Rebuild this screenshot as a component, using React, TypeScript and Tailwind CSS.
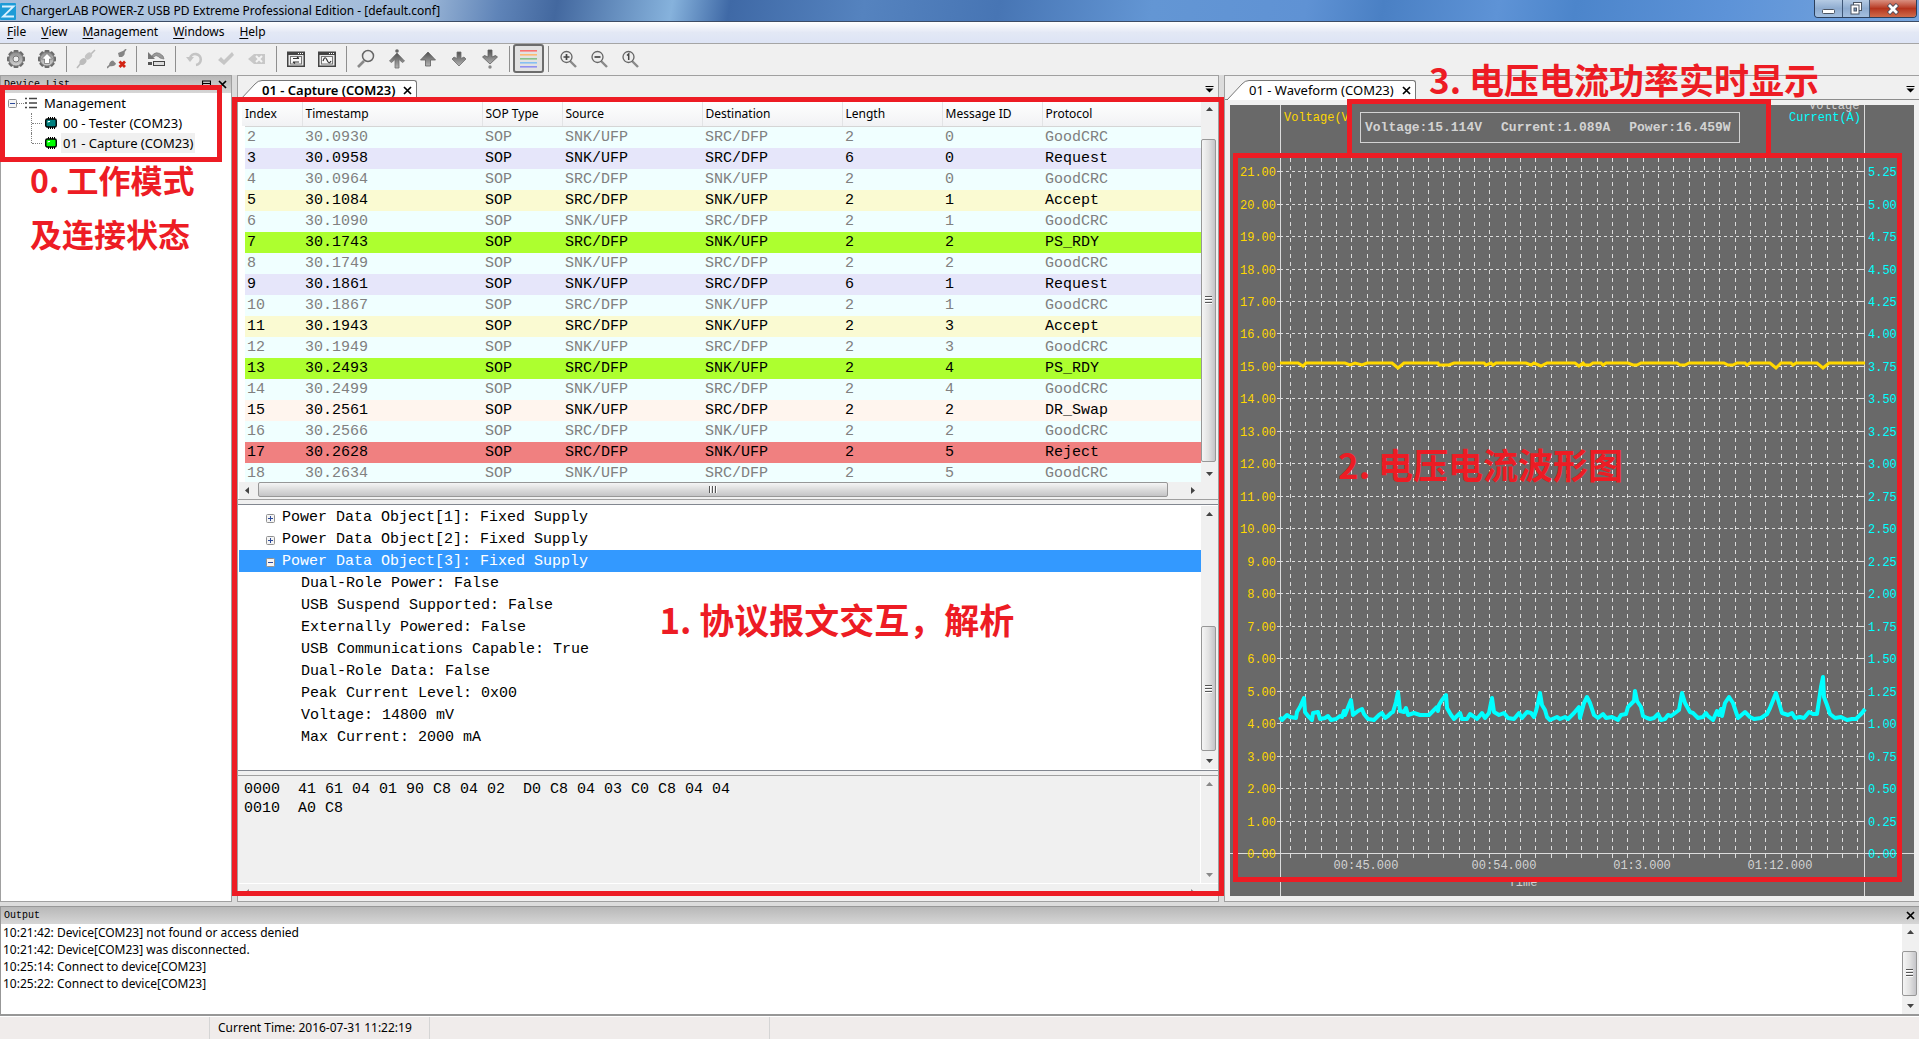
import { useState } from 'react';
import type { ReactNode } from 'react';
import clsx from 'clsx';

interface Packet {
    index: number;
    time: string;
    source: string;
    destination: string;
    length: number;
    messageId: number;
    protocol: string;
}

const SRC = 'SRC/DFP';
const SNK = 'SNK/UFP';

const packets: Packet[] = [
    { index: 2, time: '30.0930', source: SNK, destination: SRC, length: 2, messageId: 0, protocol: 'GoodCRC' },
    { index: 3, time: '30.0958', source: SNK, destination: SRC, length: 6, messageId: 0, protocol: 'Request' },
    { index: 4, time: '30.0964', source: SRC, destination: SNK, length: 2, messageId: 0, protocol: 'GoodCRC' },
    { index: 5, time: '30.1084', source: SRC, destination: SNK, length: 2, messageId: 1, protocol: 'Accept' },
    { index: 6, time: '30.1090', source: SNK, destination: SRC, length: 2, messageId: 1, protocol: 'GoodCRC' },
    { index: 7, time: '30.1743', source: SRC, destination: SNK, length: 2, messageId: 2, protocol: 'PS_RDY' },
    { index: 8, time: '30.1749', source: SNK, destination: SRC, length: 2, messageId: 2, protocol: 'GoodCRC' },
    { index: 9, time: '30.1861', source: SNK, destination: SRC, length: 6, messageId: 1, protocol: 'Request' },
    { index: 10, time: '30.1867', source: SRC, destination: SNK, length: 2, messageId: 1, protocol: 'GoodCRC' },
    { index: 11, time: '30.1943', source: SRC, destination: SNK, length: 2, messageId: 3, protocol: 'Accept' },
    { index: 12, time: '30.1949', source: SNK, destination: SRC, length: 2, messageId: 3, protocol: 'GoodCRC' },
    { index: 13, time: '30.2493', source: SRC, destination: SNK, length: 2, messageId: 4, protocol: 'PS_RDY' },
    { index: 14, time: '30.2499', source: SNK, destination: SRC, length: 2, messageId: 4, protocol: 'GoodCRC' },
    { index: 15, time: '30.2561', source: SNK, destination: SRC, length: 2, messageId: 2, protocol: 'DR_Swap' },
    { index: 16, time: '30.2566', source: SRC, destination: SNK, length: 2, messageId: 2, protocol: 'GoodCRC' },
    { index: 17, time: '30.2628', source: SRC, destination: SNK, length: 2, messageId: 5, protocol: 'Reject' },
    { index: 18, time: '30.2634', source: SNK, destination: SRC, length: 2, messageId: 5, protocol: 'GoodCRC' },
];

const rowColors: Record<string, string> = {
    GoodCRC: 'bg-[#f0ffff] text-[#808080]',
    Request: 'bg-[#e6e6fa] text-black',
    Accept: 'bg-[#fafad2] text-black',
    PS_RDY: 'bg-[#adff2f] text-black',
    DR_Swap: 'bg-[#fff5ee] text-black',
    Reject: 'bg-[#f08080] text-black',
};

const pdoFields = [
    'Dual-Role Power: False',
    'USB Suspend Supported: False',
    'Externally Powered: False',
    'USB Communications Capable: True',
    'Dual-Role Data: False',
    'Peak Current Level: 0x00',
    'Voltage: 14800 mV',
    'Max Current: 2000 mA',
];

const outputLines = [
    '10:21:42: Device[COM23] not found or access denied',
    '10:21:42: Device[COM23] was disconnected.',
    '10:25:14: Connect to device[COM23]',
    '10:25:22: Connect to device[COM23]',
];

const currentTrace =
    '50,612 52,615 57,610 60,612 66,613 67,607 70,602 74,593 75,607 78,611 82,615 83,608 88,607 90,614 95,613 98,611 101,615 106,614 110,611 112,612 114,606 115,610 121,595 123,610 128,606 132,604 134,609 138,614 144,615 149,610 152,608 155,613 158,611 161,608 163,607 166,597 168,587 170,606 174,607 176,603 178,610 184,608 190,610 199,610 204,605 207,602 208,606 209,600 212,595 216,590 217,603 221,610 224,614 230,608 232,614 237,614 240,609 243,611 247,614 252,608 255,613 259,608 262,593 264,607 269,610 274,608 278,613 284,614 289,608 292,613 297,607 301,608 304,612 306,606 308,598 310,588 312,600 315,605 317,612 320,615 327,612 330,614 335,612 338,614 344,608 349,602 350,613 354,598 357,592 360,598 364,610 368,613 373,609 376,613 382,612 388,615 391,610 396,609 398,602 404,596 405,586 407,596 411,602 413,611 417,613 420,614 424,613 428,609 431,615 435,614 438,610 441,611 445,608 449,605 452,588 455,598 460,607 463,608 468,613 473,612 476,608 478,611 483,615 487,606 489,610 491,604 492,611 495,598 499,592 503,598 508,613 515,607 520,612 524,614 531,613 537,609 540,603 546,588 549,598 552,608 558,610 562,608 565,613 570,612 574,613 579,607 583,609 587,609 591,582 593,572 594,592 597,600 600,609 605,613 611,612 617,615 622,614 626,614 632,608 635,604';

const voltageTrace =
    '50,258 68,258 73,261 76,258 115,258 120,260 125,258 132,260 137,258 162,258 168,263 174,258 208,258 209,260 219,260 224,258 254,258 256,260 261,258 263,260 266,258 296,258 301,260 304,258 311,261 317,258 345,258 349,261 353,258 355,260 360,260 363,258 371,258 373,260 376,258 398,258 403,260 407,260 411,258 447,258 450,260 455,260 459,258 494,258 498,260 503,260 507,258 515,258 517,260 520,258 540,258 546,263 551,258 561,258 563,260 566,258 587,258 593,263 599,258 635,258';

const ui = "font-['Noto_Sans','Noto_Sans_CJK_SC',sans-serif]";
const mono = "font-['Liberation_Mono',monospace]";
const noteFont = "font-['Noto_Sans_CJK_SC',sans-serif] font-bold text-[#ed1c24] whitespace-nowrap";

const Caret = ({ dir }: { dir: 'up' | 'down' | 'left' | 'right' }) => {
    const d = { up: 'M1 6L4.5 2L8 6Z', down: 'M1 3L4.5 7L8 3Z', left: 'M6 1L2 4.5L6 8Z', right: 'M3 1L7 4.5L3 8Z' }[dir];
    return <svg width="9" height="9" viewBox="0 0 9 9"><path d={d} fill="#444" /></svg>;
};

interface ScrollBarProps {
    horizontal?: boolean;
    before?: string;
    thumb?: string;
    after?: string;
    faded?: boolean;
}

const ScrollBar = ({ horizontal, before = 'flex-1', thumb, after = 'flex-none', faded }: ScrollBarProps) => (
    <div className={clsx('flex shrink-0 bg-[#f0f0f0]', horizontal ? 'h-[17px] flex-row' : 'w-[17px] flex-col')}>
        <button type="button" aria-label={horizontal ? 'Scroll left' : 'Scroll up'} className={clsx('flex size-[17px] shrink-0 items-center justify-center', faded && 'opacity-60')}>
            <Caret dir={horizontal ? 'left' : 'up'} />
        </button>
        <div className={before} />
        {thumb && (
            <div
                className={clsx(
                    'flex items-center justify-center gap-px rounded-[2px] border border-[#979797]',
                    horizontal ? 'mb-[2px] flex-row bg-linear-to-b from-[#f5f5f5] via-[#dcdcdc] to-[#c4c4c6]' : 'mr-[2px] flex-col bg-linear-to-r from-[#f5f5f5] via-[#e2e2e2] to-[#c4c4c8]',
                    thumb,
                )}
            >
                {[0, 1, 2].map((i) => (
                    <div key={i} className={clsx('border-[#555] bg-white', horizontal ? 'h-[7px] w-[2px] border-l' : 'h-[2px] w-[7px] border-t')} />
                ))}
            </div>
        )}
        <div className={after} />
        <button type="button" aria-label={horizontal ? 'Scroll right' : 'Scroll down'} className={clsx('flex size-[17px] shrink-0 items-center justify-center', faded && 'opacity-60')}>
            <Caret dir={horizontal ? 'right' : 'down'} />
        </button>
    </div>
);

const CloseX = () => (
    <svg width="9" height="9" viewBox="0 0 9 9"><path d="M1 1L8 8M8 1L1 8" stroke="#000" strokeWidth="1.7" /></svg>
);

const Expander = ({ open }: { open?: boolean }) => (
    <svg width="9" height="9" viewBox="0 0 9 9" className="shrink-0">
        <rect x="0.5" y="0.5" width="8" height="8" rx="1" fill="#f4f4f4" stroke="#919191" />
        <path d={open ? 'M2 4.5H7' : 'M2 4.5H7M4.5 2V7'} stroke="#2c4a9a" />
    </svg>
);

const Chip = ({ color }: { color: string }) => (
    <svg width="12" height="12" viewBox="0 0 12 12" className="shrink-0">
        <path d="M3.5 0V12M5.5 0V12M7.5 0V12M9.5 0V12" stroke="#000" />
        <rect x="0.75" y="2" width="10.5" height="8" rx="1.5" fill={color} stroke="#000" strokeWidth="1.4" />
        <path d="M3 5.5V4.5H5" stroke="#fff" fill="none" />
    </svg>
);

const Tab = ({ label, active }: { label: string; active?: boolean }) => (
    <div className="relative flex h-[24px] items-end border-b border-[#8c8c8c] pl-[2px]">
        <svg width="22" height="20" viewBox="0 0 22 20" className="-mb-px shrink-0">
            <path d="M0 20L15 4Q18 0.5 22 0.5V20Z" fill="#fff" />
            <path d="M0 20L15 4Q18 0.5 22 0.5" fill="none" stroke="#777" />
        </svg>
        <div className="-mb-px flex h-[20px] items-center gap-2 rounded-tr-[3px] border-t border-r border-[#777] bg-white pb-px pr-[4px]">
            <button type="button" className={clsx('text-[13px] leading-[17px]', active && 'font-semibold')}>{label}</button>
            <button type="button" aria-label={`Close ${label}`}><CloseX /></button>
        </div>
        <button type="button" aria-label="Window list" className="mb-[6px] ml-auto mr-[4px]">
            <svg width="9" height="7" viewBox="0 0 9 7"><path d="M0.5 0.5H8.5" stroke="#000" /><path d="M0.5 2.5H8.5L4.5 6.5Z" fill="#000" /></svg>
        </button>
    </div>
);

const gearTeeth = [0, 45, 90, 135, 180, 225, 270, 315];

const Gear = ({ children }: { children: ReactNode }) => (
    <>
        {gearTeeth.map((a) => <rect key={a} x="7.5" y="1" width="5" height="5" rx="1" fill="#6b6b6b" transform={`rotate(${a} 10 10)`} />)}
        <circle cx="10" cy="10" r="7" fill="url(#metal)" stroke="#777" strokeWidth="0.8" />
        {children}
    </>
);

const Lens = ({ children }: { children?: ReactNode }) => (
    <>
        <path d="M12 12L18 18" stroke="#8a8a8a" strokeWidth="2.4" />
        <circle cx="8.5" cy="8" r="5.5" fill="#ededed" stroke="#666" strokeWidth="1.3" />
        {children}
    </>
);

const FrameWindow = ({ children }: { children: ReactNode }) => (
    <>
        <rect x="1.75" y="3.25" width="16.5" height="14" fill="#e8e8e8" stroke="#444" strokeWidth="1.5" />
        <path d="M2 5H18" stroke="#444" strokeWidth="2" />
        <path d="M12 4.5H13M14 4.5H15M16 4.5H17" stroke="#fff" />
        <rect x="4.5" y="7.5" width="11" height="7.5" fill="#f8f8f8" stroke="#777" />
        {children}
    </>
);

interface Tool {
    name: string;
    icon: ReactNode;
    disabled?: boolean;
}

const toolGroups: Tool[][] = [
    [
        { name: 'Settings', icon: <Gear><circle cx="10" cy="10" r="3" fill="#eee" stroke="#777" /></Gear> },
        { name: 'Firmware settings', icon: <Gear><path d="M10 4.5L4.5 10H7.5V14.5H12.5V10H15.5Z" fill="#fff" stroke="#777" strokeWidth="0.8" /></Gear> },
    ],
    [
        { name: 'Connect', disabled: true, icon: <><path d="M1 19L5 14M15 5L19 1" stroke="#bbb" strokeWidth="1.6" /><ellipse cx="7" cy="12.5" rx="3.8" ry="3" fill="#bcbcbc" transform="rotate(-45 7 12.5)" /><ellipse cx="12.5" cy="7" rx="4" ry="3" fill="#c4c4c4" transform="rotate(-45 12.5 7)" /></> },
        { name: 'Disconnect', icon: <><path d="M0 19L3 16M16 4L19 0" stroke="#888" strokeWidth="1.6" /><path d="M2 17Q2 12 6 11.5L9 14.5Q8 18 2 17ZM11 4L17 1.5Q19 6 15 8L12 8Z" fill="#858585" /><path d="M12.5 12.5L18 18M18 12.5L12.5 18" stroke="#d22414" strokeWidth="2.8" /></> },
    ],
    [
        { name: 'Reset device', icon: <><path d="M5 8Q10 0 17 7L18 10L14 9Q10 5 8 8Z" fill="#999" stroke="#777" strokeWidth="0.7" /><path d="M2 3V10H9Z" fill="#777" /><path d="M2 14.5H6" stroke="#555" strokeWidth="3" /><rect x="7.5" y="12.5" width="11" height="4" fill="#ddd" stroke="#444" /></> },
    ],
    [
        { name: 'Undo', disabled: true, icon: <><path d="M5 9A5.5 5.5 0 1 1 11 16" fill="none" stroke="#c4c4c4" strokeWidth="2.6" /><path d="M1 8H9L5 13Z" fill="#c4c4c4" /></> },
        { name: 'Apply', disabled: true, icon: <path d="M2 11L5 8L8 11L16 3L18 6L8 16Z" fill="#c6c6c6" /> },
        { name: 'Clear', disabled: true, icon: <><path d="M1 10L7 5H18V15H7Z" fill="#c8c8c8" /><path d="M9 7L15 13M15 7L9 13" stroke="#f4f4f4" strokeWidth="2" /></> },
    ],
    [
        { name: 'Data view', icon: <FrameWindow><path d="M7 9.5H13M7 13H13M11 8L13 9.5M9 14.5L7 13" stroke="#333" strokeWidth="1.2" /></FrameWindow> },
        { name: 'Waveform view', icon: <FrameWindow><path d="M6 12Q8 6 10 11T14 12" fill="none" stroke="#333" strokeWidth="1.2" /></FrameWindow> },
    ],
    [
        { name: 'Find', icon: <><path d="M8 12L2 18" stroke="#8a8a8a" strokeWidth="2.6" /><circle cx="12" cy="7" r="5.5" fill="#ededed" stroke="#666" strokeWidth="1.5" /></> },
        { name: 'First', icon: <><circle cx="10" cy="2" r="1.8" fill="#666" /><path d="M10 4L17.5 12L15.5 13.5L12 10.5V19H8V10.5L4.5 13.5L2.5 12Z" fill="url(#arrow)" stroke="#707070" strokeWidth="0.8" /></> },
        { name: 'Previous', icon: <path d="M10 3L17.5 11H12.5V17H7.5V11H2.5Z" fill="url(#arrow)" stroke="#606060" strokeWidth="0.8" /> },
        { name: 'Next', icon: <path d="M8 3H12V9.5L15 8L17 10L10 17L3 10L5 8L8 9.5Z" fill="url(#arrow)" stroke="#707070" strokeWidth="0.8" /> },
        { name: 'Last', icon: <><path d="M8 1H12V8L15.5 6.5L17.5 8L10 15L2.5 8L4.5 6.5L8 8Z" fill="url(#arrow)" stroke="#606060" strokeWidth="0.8" /><circle cx="10" cy="18" r="1.7" fill="#888" /></> },
    ],
];

const zoomTools: Tool[] = [
    { name: 'Zoom in', icon: <Lens><path d="M5.5 8H11.5M8.5 5V11" stroke="#444" strokeWidth="1.7" /></Lens> },
    { name: 'Zoom out', icon: <Lens><path d="M5.5 8H11.5" stroke="#444" strokeWidth="1.7" /></Lens> },
    { name: 'Zoom reset', icon: <Lens><path d="M7 6.5L8.7 5V11" fill="none" stroke="#444" strokeWidth="1.5" /></Lens> },
];

const ToolButton = ({ tool }: { tool: Tool }) => (
    <button type="button" aria-label={tool.name} disabled={tool.disabled} className="flex h-[29px] w-[31px] items-center justify-center">
        <svg width="20" height="20" viewBox="0 0 20 20" fill="none">{tool.icon}</svg>
    </button>
);

const ToolSeparator = () => (
    <div className="flex w-2 justify-center">
        <div className="h-[26px] w-px bg-[#8f8f8f]" />
    </div>
);

const TitleBar = () => (
    <header className="flex h-[22px] items-center border-b border-[#3c4c66] bg-[linear-gradient(100deg,#a3bddc_0%,#b4c8df_12%,#9db8d8_22%,#5f84b8_26%,#43689f_29%,#86b2dc_35%,#3f69a6_38%,#5583bf_45%,#4775b4_52%,#6396d4_60%,#5f92d4_68%,#4a80c4_72%,#5e93d6_78%,#4c85cb_82%,#5d93d8_90%,#78a6de_100%)]">
        <svg width="16" height="20" viewBox="0 0 16 20" className="shrink-0">
            <rect y="2" width="16" height="17" rx="1" fill="#1e9bd7" />
            <path d="M2 5.5H13.5L3 15.5H14" fill="none" stroke="#d9f1ff" strokeWidth="1.8" />
        </svg>
        <h1 className="ml-[5px] text-[12px] leading-5">ChargerLAB POWER-Z USB PD Extreme Professional Edition - [default.conf]</h1>
        <div className="ml-auto mr-[2px] flex h-[18px] self-start overflow-hidden rounded-b-[4px] border border-t-0 border-[#2b3f5c]">
            <button type="button" aria-label="Minimize" className="flex w-[28px] items-center justify-center border-r border-[#3f5777] bg-linear-to-b from-[#b5cbe4] via-[#8facd0] to-[#a4bfdf]">
                <svg width="13" height="12" viewBox="0 0 13 12"><rect x="0.5" y="6.5" width="12" height="4" rx="1" fill="#fff" stroke="#4b5563" /></svg>
            </button>
            <button type="button" aria-label="Restore" className="flex w-[27px] items-center justify-center border-r border-[#3f5777] bg-linear-to-b from-[#b5cbe4] via-[#8facd0] to-[#a4bfdf]">
                <svg width="13" height="13" viewBox="0 0 13 13"><rect x="3.5" y="0.5" width="8" height="8" fill="#fff" stroke="#4b5563" /><rect x="1" y="3" width="8" height="9" fill="#fff" stroke="#4b5563" /><rect x="4" y="6" width="2.5" height="3" fill="#7f9cc0" stroke="#4b5563" /></svg>
            </button>
            <button type="button" aria-label="Close" className="flex w-[46px] items-center justify-center bg-linear-to-b from-[#d98f80] via-[#b5341d] to-[#cf6a4a]">
                <svg width="14" height="12" viewBox="0 0 14 12"><path d="M2.5 1.5L11.5 10.5M11.5 1.5L2.5 10.5" stroke="#4b4b5c" strokeWidth="4.5" /><path d="M3 2L11 10M11 2L3 10" stroke="#fff" strokeWidth="2.8" /></svg>
            </button>
        </div>
    </header>
);

const MenuBar = () => (
    <nav className="flex h-[22px] items-start gap-[15px] border-b border-[#a5a5a5] bg-linear-to-b from-white via-[#e3e8f5] to-[#dde4f5] pl-[7px] text-[12px] leading-5">
        {['File', 'View', 'Management', 'Windows', 'Help'].map((m) => (
            <button key={m} type="button"><span className="underline underline-offset-2">{m[0]}</span>{m.slice(1)}</button>
        ))}
    </nav>
);

const ToolBar = () => {
    const [colorize, setColorize] = useState(true);
    return (
        <div className="flex h-[31px] items-start bg-[#f0f0f0]">
            {toolGroups.map((group, i) => (
                <div key={i} className="flex items-center">
                    {group.map((t) => <ToolButton key={t.name} tool={t} />)}
                    <ToolSeparator />
                </div>
            ))}
            <button
                type="button"
                aria-label="Colorize packets"
                aria-pressed={colorize}
                onClick={() => setColorize(!colorize)}
                className={clsx('flex h-[29px] w-[31px] items-center justify-center rounded-[3px] border-2', colorize ? 'border-[#6c6c6c] bg-[#e2e2e2]' : 'border-transparent')}
            >
                <svg width="17" height="20" viewBox="0 0 17 20">
                    {['#f87171', '#fdba74', '#86c08a', '#86bff2', '#8f8ff0'].map((c, i) => <rect key={c} y={1 + i * 4} width="17" height="1.6" fill={c} />)}
                </svg>
            </button>
            <div className="flex items-center">
                <ToolSeparator />
                {zoomTools.map((t) => <ToolButton key={t.name} tool={t} />)}
            </div>
        </div>
    );
};

const DeviceList = () => (
    <aside className="relative flex min-h-0 flex-col border border-[#a0a0a0] bg-white">
        <div className={clsx('flex h-[17px] items-center bg-linear-to-b from-[#b8b8b8] to-[#d6d6d6] pl-[3px] pr-[4px] text-[10px]', mono)}>
            <h2>Device List</h2>
            <button type="button" aria-label="Maximize panel" className="ml-auto mr-[7px]">
                <svg width="9" height="9" viewBox="0 0 9 9"><path d="M0.5 1V8.5H8.5V1M0 1H9M0 3.5H9" fill="none" stroke="#000" strokeWidth="1.2" /></svg>
            </button>
            <button type="button" aria-label="Close panel"><CloseX /></button>
        </div>
        <ul className="text-[13px] leading-5">
            <li>
                <div className="flex items-center pl-[7px]">
                    <Expander open />
                    <span className="w-[7px] border-t border-dotted border-[#808080]" />
                    <svg width="14" height="12" viewBox="0 0 14 12" className="mr-[6px]"><path d="M1 1.5H3M1 6H3M1 10.5H3M5 1.5H13M5 6H13M5 10.5H13" stroke="#444" strokeWidth="1.5" /></svg>
                    <span>Management</span>
                </div>
                <ul className="pl-[30px]">
                    <li className="flex items-center">
                        <span className="h-5 w-px border-l border-dotted border-[#808080]" />
                        <span className="mr-[3px] w-[10px] border-t border-dotted border-[#808080]" />
                        <Chip color="#008080" />
                        <span className="ml-[4px] px-[2px]">00 - Tester (COM23)</span>
                    </li>
                    <li className="flex items-center">
                        <span className="h-[10px] w-px self-start border-l border-dotted border-[#808080]" />
                        <span className="mr-[3px] w-[10px] border-t border-dotted border-[#808080]" />
                        <Chip color="#00ff00" />
                        <span className="ml-[4px] bg-[#f0f0f0] px-[2px]">01 - Capture (COM23)</span>
                    </li>
                </ul>
            </li>
        </ul>
        <div className="pointer-events-none absolute -left-px -right-px top-[9px] mr-[10px] h-[77px] border-[5px] border-[#ed1c24]" />
        <p className={clsx('-mt-px pl-[29px] text-[32px] leading-[54px]', noteFont)}>0. 工作模式<br />及连接状态</p>
    </aside>
);

const headers = ['Index', 'Timestamp', 'SOP Type', 'Source', 'Destination', 'Length', 'Message ID', 'Protocol'];

const PacketTable = () => (
    <div className="flex min-h-0 flex-col border-b border-[#a0a0a0] bg-white pl-px pt-px">
        <div className="flex min-h-0 flex-1">
            <div className="min-w-0 flex-1 overflow-hidden">
                <table className="w-full table-fixed border-collapse text-left">
                    <colgroup>
                        <col className="w-[60px]" />
                        <col className="w-[180px]" />
                        <col className="w-[80px]" />
                        <col className="w-[140px]" />
                        <col className="w-[140px]" />
                        <col className="w-[100px]" />
                        <col className="w-[100px]" />
                        <col />
                    </colgroup>
                    <thead>
                        <tr className="h-[25px] bg-linear-to-b from-white to-[#f1f2f4] text-[12px] leading-5">
                            {headers.map((h) => (
                                <th key={h} className="border-b border-r border-b-[#d5d5d5] border-r-[#e3e4e6] pl-[3px] pt-px font-normal last:border-r-0">{h}</th>
                            ))}
                        </tr>
                    </thead>
                    <tbody className={clsx('text-[15px] leading-5', mono)}>
                        {packets.map((p) => (
                            <tr key={p.index} className={clsx('h-[21px]', rowColors[p.protocol])}>
                                <td className="border-l-[6px] border-white pl-[2px] pt-px">{p.index}</td>
                                <td className="pl-[3px] pt-px">{p.time}</td>
                                <td className="pl-[3px] pt-px">SOP</td>
                                <td className="pl-[3px] pt-px">{p.source}</td>
                                <td className="pl-[3px] pt-px">{p.destination}</td>
                                <td className="pl-[3px] pt-px">{p.length}</td>
                                <td className="pl-[3px] pt-px">{p.messageId}</td>
                                <td className="pl-[3px] pt-px">{p.protocol}</td>
                            </tr>
                        ))}
                    </tbody>
                </table>
            </div>
            <ScrollBar before="flex-[21]" thumb="flex-[323]" after="flex-[3]" />
        </div>
        <div className="flex bg-[#f0f0f0]">
            <div className="min-w-0 flex-1"><ScrollBar horizontal before="flex-[2]" thumb="flex-[909]" after="flex-[16]" /></div>
            <div className="w-[17px]" />
        </div>
    </div>
);

const PacketDetail = () => (
    <div className="flex min-h-0 border-y border-[#828790] bg-white p-px pr-0">
        <ul className={clsx('min-w-0 flex-1 text-[15px] leading-5', mono)}>
            {[1, 2, 3].map((n) => (
                <li key={n}>
                    <button type="button" className={clsx('flex w-full items-center gap-[7px] pl-[27px] pt-[2px]', n === 3 && 'bg-[#3399ff] text-white')}>
                        <Expander open={n === 3} />
                        {`Power Data Object[${n}]: Fixed Supply`}
                    </button>
                    {n === 3 && (
                        <ul className="pl-[62px]">
                            {pdoFields.map((f) => <li key={f} className="pt-[2px]">{f}</li>)}
                        </ul>
                    )}
                </li>
            ))}
        </ul>
        <ScrollBar before="flex-[104]" thumb="flex-[124]" after="flex-[1]" />
    </div>
);

const HexDump = () => (
    <div className="flex min-h-0 flex-col border-t border-[#a0a0a0] bg-[#f0f0f0] pl-px">
        <div className="flex min-h-0 flex-1">
            <pre className={clsx('min-w-0 flex-1 border-r border-white pl-[5px] pt-1 text-[15px] leading-[19px]', mono)}>
                {'0000  41 61 04 01 90 C8 04 02  D0 C8 04 03 C0 C8 04 04\n0010  A0 C8'}
            </pre>
            <ScrollBar faded />
        </div>
        <div className="flex border-t border-white">
            <div className="min-w-0 flex-1"><ScrollBar horizontal faded /></div>
            <div className="w-[17px]" />
        </div>
    </div>
);

const CapturePanel = () => (
    <section className="relative flex min-h-0 min-w-0 flex-col border border-[#a0a0a0] bg-[#f0f0f0]">
        <Tab label="01 - Capture (COM23)" active />
        <div className="grid min-h-0 flex-1 grid-rows-[minmax(0,400fr)_minmax(0,267fr)_minmax(0,126fr)] gap-1">
            <PacketTable />
            <PacketDetail />
            <HexDump />
        </div>
        <div className="pointer-events-none absolute -inset-x-[6px] bottom-[5px] top-[21px] border-[5px] border-[#ed1c24]" />
        <p className={clsx('absolute left-[43%] top-[518px] text-[35px] leading-[50px]', noteFont)}>1. 协议报文交互，解析</p>
    </section>
);

const LEFT = 50;
const RIGHT = 635;
const ZERO_Y = 748;
const volts = Array.from({ length: 22 }, (_, i) => i);
const ticks = Array.from({ length: 38 }, (_, i) => Math.round(60 + i * 15.33));
const times = ['00:45.000', '00:54.000', '01:3.000', '01:12.000'];

const volY = (v: number) => Math.round(ZERO_Y - v * 32.47);

const Waveform = () => (
    <svg viewBox="0 0 684 791" className={clsx('block h-full w-full bg-[#696969] text-[12px]', mono)}>
        <g stroke="#dcdcdc" shapeRendering="crispEdges">
            {ticks.map((x) => <path key={x} d={`M${x + 0.5} 753V48`} strokeDasharray="4 4" />)}
            {volts.slice(1).map((v) => <path key={v} d={`M${LEFT} ${volY(v) + 0.5}H${RIGHT}`} strokeDasharray="3 3" />)}
            {volts.slice(1).map((v) => <path key={v} d={`M${LEFT - 3} ${volY(v) + 0.5}h4M${RIGHT - 6} ${volY(v) + 0.5}h6`} />)}
            <path d={`M${LEFT + 0.5} 0V791M${RIGHT - 0.5} 0V791M0 ${ZERO_Y + 0.5}H684`} />
        </g>
        <g fill="#ffd700" textAnchor="end">
            {volts.map((v) => <text key={v} x="46" y={volY(v) + 5}>{v.toFixed(2)}</text>)}
        </g>
        <g fill="#00ffff">
            {volts.map((v) => <text key={v} x="638" y={volY(v) + 5}>{(v / 4).toFixed(2)}</text>)}
            <text x="559" y="16">Current(A)</text>
        </g>
        <text x="54" y="16" fill="#ffd700">Voltage(V)</text>
        <g fill="#d3d3d3">
            <text x="579" y="4">Voltage</text>
            {times.map((t, i) => <text key={t} x={136 + i * 138} y="764" textAnchor="middle">{t}</text>)}
            <text x="293" y="781" textAnchor="middle">Time</text>
        </g>
        <polyline points={voltageTrace} fill="none" stroke="#ffd700" strokeWidth="3" />
        <polyline points={currentTrace} fill="none" stroke="#00ffff" strokeWidth="4" strokeLinejoin="round" />
    </svg>
);

const WaveformPanel = () => (
    <section className="relative flex min-h-0 min-w-0 flex-col border border-r-0 border-[#a0a0a0] bg-[#f0f0f0]">
        <Tab label="01 - Waveform (COM23)" />
        <div className="min-h-0 flex-1 p-[5px]"><Waveform /></div>
        {/* live readout floats over the top margin of the chart */}
        <div className="absolute left-[122px] right-[148px] top-[23px] h-[54px] border-[5px] border-b-0 border-[#ed1c24] bg-[#696969] pl-[8px] pr-[26px] pt-[8px]">
            <div className={clsx('flex h-[31px] items-center gap-[19px] whitespace-nowrap border border-[#d3d3d3] pl-[4px] pt-px text-[13px] font-bold text-[#d3d3d3]', mono)}>
                <span>Voltage:15.114V</span>
                <span>Current:1.089A</span>
                <span>Power:16.459W</span>
            </div>
        </div>
        <div className="pointer-events-none absolute bottom-[19px] left-[8px] right-[17px] top-[77px] border-[5px] border-[#ed1c24]" />
        <p className={clsx('absolute -top-[22px] left-[204px] text-[35px] leading-[50px]', noteFont)}>3. 电压电流功率实时显示</p>
        <p className={clsx('absolute left-[113px] top-[363px] text-[35px] leading-[50px]', noteFont)}>2. 电压电流波形图</p>
    </section>
);

const OutputPanel = () => (
    <section className="flex h-[110px] flex-col border-b-2 border-l border-t border-[#979797] bg-white">
        <div className={clsx('flex h-[17px] shrink-0 items-center justify-between bg-linear-to-b from-[#b8b8b8] to-[#d6d6d6] pl-[3px] pr-[4px] text-[10px]', mono)}>
            <h2>Output</h2>
            <button type="button" aria-label="Close output"><CloseX /></button>
        </div>
        <div className="flex min-h-0 flex-1">
            <ul className="flex-1 pl-[2px] text-[12px] leading-[17px]">
                {outputLines.map((l) => <li key={l}>{l}</li>)}
            </ul>
            <ScrollBar before="flex-[10]" thumb="flex-[45]" after="flex-[1]" />
        </div>
    </section>
);

const StatusBar = () => (
    <footer className="flex h-[24px] border-y border-white bg-[#f0eceb] text-[12px] leading-[22px]">
        <div className="w-[210px] border-r border-[#d5d5d5]" />
        <div className="w-[220px] border-r border-[#d5d5d5] pl-[8px]">Current Time: 2016-07-31 11:22:19</div>
        <div className="w-[340px] border-r border-[#d5d5d5]" />
    </footer>
);

const App = () => (
    <div className={clsx('flex h-screen flex-col overflow-hidden bg-[#dcdcdc] text-black', ui)}>
        <svg width="0" height="0" className="absolute">
            <defs>
                <linearGradient id="metal" x1="0" y1="0" x2="0" y2="1"><stop offset="0" stopColor="#8c8c8c" /><stop offset="1" stopColor="#d2d2d2" /></linearGradient>
                <linearGradient id="arrow" x1="0" y1="0" x2="0" y2="1"><stop offset="0" stopColor="#505050" /><stop offset="1" stopColor="#b4b4b4" /></linearGradient>
            </defs>
        </svg>
        <TitleBar />
        <MenuBar />
        <ToolBar />
        <main className="mb-1 grid min-h-0 flex-1 grid-cols-[232px_minmax(0,982fr)_minmax(0,695fr)] grid-rows-[minmax(0,1fr)] gap-[5px]">
            <DeviceList />
            <CapturePanel />
            <WaveformPanel />
        </main>
        <OutputPanel />
        <StatusBar />
    </div>
);

export default App;
